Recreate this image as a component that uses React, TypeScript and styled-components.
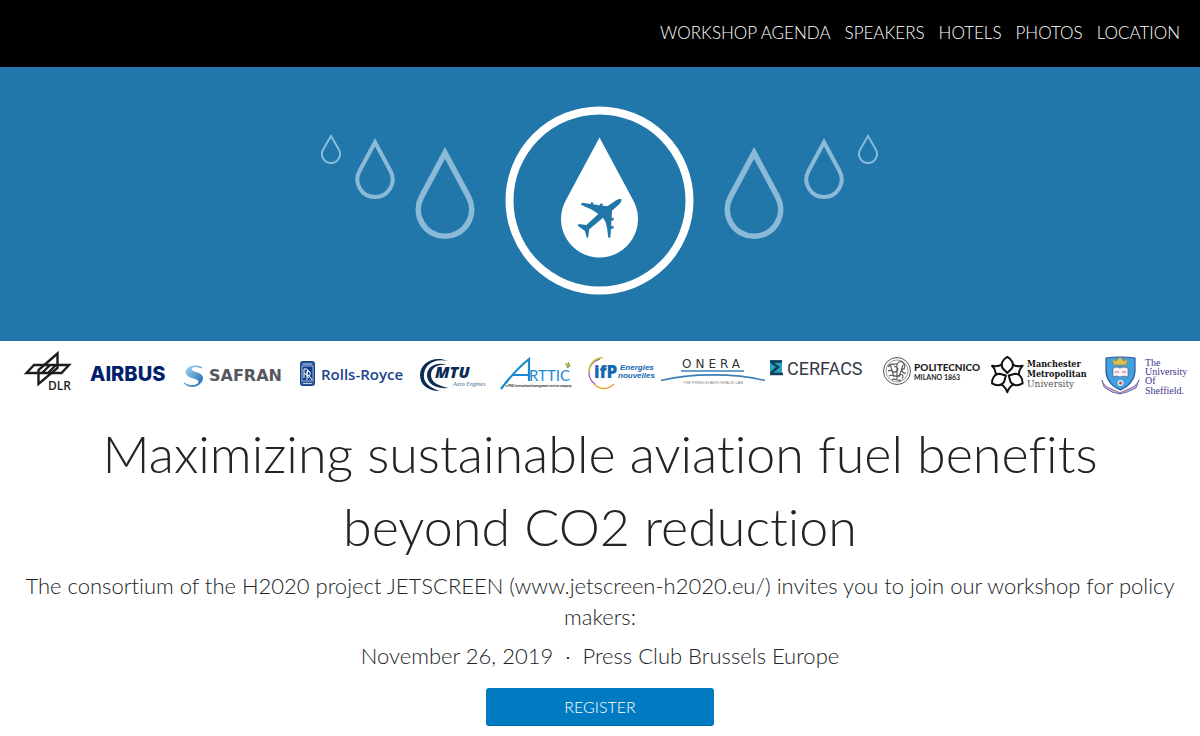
import React from "react";
import styled, { createGlobalStyle } from "styled-components";

const GlobalStyle = createGlobalStyle`
  * { box-sizing: border-box; }
  body {
    margin: 0;
    background: #fff;
    color: #212529;
    font-family: Lato, "Open Sans", sans-serif;
    font-weight: 300;
    font-variant-ligatures: none;
  }
`;

const NavBar = styled.nav`
  display: flex;
  justify-content: flex-end;
  align-items: center;
  flex-wrap: wrap;
  gap: 14px;
  min-height: 67px;
  padding: 0 20px 2px;
  background: #000;
`;

const NavLink = styled.a`
  color: #fff;
  font-size: 17px;
  line-height: 24px;
  text-decoration: none;
  text-transform: uppercase;
`;

const Hero = styled.header`
  display: flex;
  justify-content: center;
  padding: 39px 16px 45px;
  background: #2277aa;
`;

const HeroArt = styled.svg`
  display: block;
  width: 560px;
  max-width: 100%;
`;

const Partners = styled.section`
  display: flex;
  flex-wrap: wrap;
  justify-content: center;
  padding: 0 8px;
  font-weight: 400;
`;

const PartnerLogo = styled.svg`
  display: block;
  flex: none;
  height: 64px;
`;

const Intro = styled.main`
  display: flex;
  flex-direction: column;
  align-items: center;
  padding: 12px 20px;
  text-align: center;
`;

const Title = styled.h1`
  max-width: 1100px;
  margin: 0 0 7px;
  font-size: 52px;
  font-weight: 300;
  line-height: 73px;
`;

const Lead = styled.p`
  margin: 0 0 8px;
  font-size: 22px;
  line-height: 31px;
`;

const RegisterButton = styled.button`
  width: 228px;
  height: 38px;
  margin-top: 9px;
  border: 0;
  border-bottom: 1px solid #0068a6;
  border-radius: 3px;
  background: #007bc2;
  color: #fff;
  font: inherit;
  font-size: 16px;
  cursor: pointer;
`;

type DropProps = { cx: number; cy: number; r: number; top: number; stroke?: number };

/* A circle joined to its apex by two tangent lines; solid white without a stroke. */
function Drop({ cx, cy, r, top, stroke = 0 }: DropProps) {
  const sin = r / (cy - top);
  const cos = Math.sqrt(1 - sin * sin);
  const radius = r - stroke / 2;
  const apex = top + stroke / 2 / sin;
  const dx = radius * cos;
  const y = cy - radius * sin;
  return (
    <path
      d={`M${cx} ${apex} L${cx + dx} ${y} A${radius} ${radius} 0 1 1 ${cx - dx} ${y} Z`}
      fill={stroke ? "none" : "#fff"}
      stroke={stroke ? "#8abad8" : "none"}
      strokeWidth={stroke}
      strokeMiterlimit={10}
    />
  );
}

const sideDrops: DropProps[] = [
  { cx: 11, cy: 48, r: 10, top: 28, stroke: 2 },
  { cx: 55, cy: 73.4, r: 19.6, top: 32, stroke: 4 },
  { cx: 125, cy: 103.5, r: 29.5, top: 41, stroke: 5.6 },
];

const links = ["Workshop Agenda", "Speakers", "Hotels", "Photos", "Location"];

type LogoProps = { name: string; x: number; width: number; children: React.ReactNode };

function Logo({ name, x, width, children }: LogoProps) {
  return (
    <PartnerLogo role="img" aria-label={name} width={width} viewBox={`${x} 0 ${width} 64`}>
      {children}
    </PartnerLogo>
  );
}

const sans = '"Liberation Sans", Arial, sans-serif';

function PartnerLogos() {
  return (
    <Partners aria-label="Project partners">
      <Logo name="DLR" x={8} width={73}>
        <g fill="none" stroke="#1d1d1b" strokeWidth="2.4">
          <path d="M26.5 32 L34 24 H69 L61.500 32 Z" />
          <path d="M57.500 12.500 V27 L38.500 43 V29 Z" />
          <path d="M42 32 L50 24 M48 32 L56 24" />
        </g>
        <text x="48" y="49" fontFamily='"Open Sans", sans-serif' fontSize="12" fontWeight="600" fill="#1d1d1b">DLR</text>
      </Logo>
      <Logo name="Airbus" x={81} width={94}>
        <text x="90" y="40" fontFamily="Inter, sans-serif" fontSize="20" fontWeight="800" fill="#00206b">AIRBUS</text>
      </Logo>
      <Logo name="Safran" x={175} width={117}>
        <defs>
          <linearGradient id="safran" x1="0" y1="0" x2="1" y2="1">
            <stop offset="0" stopColor="#a9dcf5" />
            <stop offset="1" stopColor="#1765ad" />
          </linearGradient>
        </defs>
        <path d="M202 27 C197 23 186 25 186 31 C186 38 199 36 199 41 C198 45 190 46 184 42 C189 48 202 46 202.500 37 C203 31 191 32 191 28 C192 25 197 25 202 27 Z" fill="url(#safran)" stroke="url(#safran)" strokeWidth="1" />
        <text x="209" y="40" fontFamily='"DejaVu Sans", sans-serif' fontSize="16" fontWeight="700" fill="#56565f">SAFRAN</text>
      </Logo>
      <Logo name="Rolls-Royce" x={292} width={119}>
        <rect x="300.500" y="20.500" width="14" height="24" rx="2" fill="#2a5a9c" stroke="#123c80" />
        <rect x="302" y="25" width="11" height="15" fill="#12408a" stroke="#b9cce6" strokeWidth="0.800" />
        <path d="M303 23 H312 M303 42.500 H312" stroke="#b9cce6" strokeWidth="1" />
        <path d="M304 37 V28 H307 Q309 30.500 307 33 H304 M306 33 L309 37 M307 39 V30 H309 Q311.500 32 309.500 34.500 H307 M309 34.500 L312 39" fill="none" stroke="#fff" strokeWidth="1" />
        <text x="321" y="39" fontFamily='"Open Sans", sans-serif' fontSize="15" fontWeight="600" fill="#1b468e">Rolls-Royce</text>
      </Logo>
      <Logo name="MTU Aero Engines" x={411} width={82}>
        <path d="M448 20 C434 14 420 22 420 34 C420 44 428 50 440 50 C428 46 423 41 424 33 C425 23 435 17 448 20 Z" fill="#0b2c56" />
        <path d="M447 24 C436 20 427 26 427 34 C427 43 436 48 449 47 C438 45 431 41 431 34 C431 27 437 23 447 24 Z" fill="#0b2c56" />
        <text x="435" y="37" fontFamily='"Open Sans", sans-serif' fontSize="16" fontWeight="800" fontStyle="italic" fill="#0b2c56">MTU</text>
        <text x="453" y="45" fontFamily="Lato, sans-serif" fontSize="6" fontWeight="700" fontStyle="italic" fill="#7898b8">Aero Engines</text>
      </Logo>
      <Logo name="Arttic" x={493} width={86}>
        <path d="M501 48 C510 36 519 26 529 18 V40 M513 34 H529" fill="none" stroke="#1a8ad0" strokeWidth="2.200" />
        <text x="529" y="40" fontFamily="Lato, sans-serif" fontSize="15" fill="#1a8ad0">RTTIC</text>
        <path d="M565 22 l4 1 l-1 4 l-2 -2 Z" fill="#c9a437" />
        <path d="M568 21 l2 4 l-3 2" fill="none" stroke="#5b8740" />
        <text x="506" y="46" fontFamily="Lato, sans-serif" fontSize="3" fontStyle="italic" fontWeight="700" fill="#222">a PNO international management services company</text>
      </Logo>
      <Logo name="IFP Energies nouvelles" x={579} width={79}>
        <path d="M600 18 C587 21 586 37 595 43" fill="none" stroke="#a15bb0" strokeWidth="1.300" />
        <path d="M603 16.500 C594 17 589 23 589 31" fill="none" stroke="#c4cf3c" strokeWidth="1.500" />
        <path d="M594 43 C601 50 609 48 614 43" fill="none" stroke="#eda23b" strokeWidth="1.500" />
        <text x="594" y="37" fontFamily='"Open Sans", sans-serif' fontSize="17" fontWeight="800" fill="#1467b2">ifP</text>
        <text x="620" y="29" fontFamily={sans} fontSize="8" fontWeight="700" fontStyle="italic" fill="#1467b2">Energies</text>
        <text x="618" y="37" fontFamily={sans} fontSize="8" fontWeight="700" fontStyle="italic" fill="#1467b2">nouvelles</text>
      </Logo>
      <Logo name="Onera" x={658} width={109}>
        <text x="682" y="27" fontFamily='"DejaVu Sans", sans-serif' fontSize="12" letterSpacing="4" fill="#333">ONERA</text>
        <path d="M681 30 H744" stroke="#3d7fb8" strokeWidth="1.500" />
        <path d="M661 39.500 C690 32 735 32 765 39.500" fill="none" stroke="#3d7fb8" strokeWidth="1.600" />
        <text x="683" y="43" fontFamily={sans} fontSize="4" fill="#888">THE FRENCH AEROSPACE LAB</text>
      </Logo>
      <Logo name="Cerfacs" x={767} width={105}>
        <rect x="770" y="19" width="12" height="15" fill="#26a5bb" />
        <path d="M770 20.500 H782 M771 21 L778 26 L771 32 M770 33 H783" fill="none" stroke="#123f5c" strokeWidth="2.500" />
        <text x="787" y="34" fontFamily="Roboto, sans-serif" fontSize="18" fill="#343a46">CERFACS</text>
      </Logo>
      <Logo name="Politecnico Milano 1863" x={872} width={114}>
        <g fill="none" stroke="#555">
          <circle cx="897" cy="30" r="13.500" />
          <circle cx="897" cy="30" r="11" strokeWidth="0.600" />
          <path d="M888 26 C891 20 896 26 899 21 C903 19 906 25 904 28 C900 27 902 33 906 32 M888 30 C893 27 893 34 897 30 C900 27 896 26 894 25 M889 35 C893 32 896 38 900 34 C903 32 904 36 902 38 M892 39 C895 36 898 41 901 39 M897 22 V38 M890 23 L894 36 M903 24 L899 36" strokeWidth="1.100" />
        </g>
        <text x="914" y="30" fontFamily="Lato, sans-serif" fontSize="10" fontWeight="900" fill="#1e1e1e">POLITECNICO</text>
        <text x="914" y="39" fontFamily="Lato, sans-serif" fontSize="7" fontWeight="700" fill="#1e1e1e">MILANO 1863</text>
      </Logo>
      <Logo name="Manchester Metropolitan University" x={986} width={109}>
        <g transform="translate(985 9) scale(0.333)" fill="none" stroke="#111" strokeWidth="6" strokeLinejoin="round">
          {[0, 120, 240].map((angle) => (
            <g key={angle} transform={`rotate(${angle} 67 74)`}>
              <path d="M67 69 L53 55 C45 42 54 28 67 21 C80 28 89 42 81 55 Z" />
              <path d="M48 103 Q62 110 67 127 Q72 110 86 103" />
            </g>
          ))}
        </g>
        <text x="1027" y="26" fontFamily='"DejaVu Serif Condensed", "DejaVu Serif", serif' fontSize="9" fontWeight="700" fill="#111">Manchester</text>
        <text x="1027" y="36" fontFamily='"DejaVu Serif Condensed", "DejaVu Serif", serif' fontSize="9" fontWeight="700" fill="#111">Metropolitan</text>
        <text x="1027" y="46" fontFamily='"DejaVu Serif", serif' fontSize="9" fill="#555">University</text>
      </Logo>
      <Logo name="The University of Sheffield" x={1095} width={97}>
        <path d="M1102 39 C1104 47 1111 47 1120 52 C1129 47 1136 47 1139 39 L1136 47 L1127 51 L1120 53 L1112 51 L1104 46 Z" fill="#c9b5d8" stroke="#7b679d" strokeWidth="1" />
        <path d="M1106 17 Q1120 15 1135 17 V31 C1134 41 1127 46 1120.500 49 C1113 46 1107 40 1106 31 Z" fill="#3ea2dc" stroke="#31529c" strokeWidth="1.200" />
        <path d="M1114 24 L1112 18 L1116 20 L1120 16 L1124 20 L1128 18 L1126 24 Z" fill="#dcc04f" stroke="#927d32" strokeWidth="0.500" />
        <path d="M1113 27 Q1117 25 1120 27 Q1124 25 1128 27 V36 Q1124 34 1120 36 Q1117 34 1113 36 Z" fill="#f6f3f4" stroke="#6b5b82" strokeWidth="0.700" />
        <path d="M1115 31 H1119 M1122 31 H1126" stroke="#cc6475" />
        <circle cx="1120.500" cy="42" r="3" fill="#e4e6f2" />
        <circle cx="1120.500" cy="42" r="1.500" fill="#c43c58" />
        <g fontFamily='"Liberation Serif", serif' fontSize="10" fill="#3f358e">
          <text x="1145" y="25">The</text>
          <text x="1145" y="34">University</text>
          <text x="1145" y="43">Of</text>
          <text x="1145" y="53">Sheffield.</text>
        </g>
      </Logo>
    </Partners>
  );
}

export default function App() {
  return (
    <>
      <GlobalStyle />
      <NavBar>
        {links.map((label) => (
          <NavLink key={label} href={`#${label.toLowerCase().replace(" ", "-")}`}>{label}</NavLink>
        ))}
      </NavBar>
      <Hero>
        <HeroArt viewBox="0 0 560 190" role="img" aria-label="Aircraft inside a fuel drop">
          {sideDrops.map((d) => <Drop key={d.cx} {...d} />)}
          {sideDrops.map((d) => <Drop key={d.cx} {...d} cx={559 - d.cx} />)}
          <circle cx="279.500" cy="94.500" r="90" fill="none" stroke="#fff" strokeWidth="8" />
          <Drop cx={279.5} cy={113} r={38.5} top={31.500} />
          <path
            transform="translate(250 84) scale(0.3333)"
            fill="#2277aa"
            d="M154 27 C156 33 151 40 146 44 L126 62 L125 84 L131 83 V90 L124 93 V109 L131 108 V115 L123 118 L121 143 H115 L111 113 L107 97 L99 83 L58 118 L54 143 H50 L45 123 L23 107 L26 102 L49 105 L85 72 L66 59 L33 44 L36 38 L62 42 L64 36 L70 38 L69 43 L89 46 L92 40 L99 42 L97 47 L113 48 L136 32 C142 28 149 26 154 27 Z"
          />
        </HeroArt>
      </Hero>
      <PartnerLogos />
      <Intro>
        <Title>Maximizing sustainable aviation fuel benefits beyond CO2 reduction</Title>
        <Lead>
          The consortium of the H2020 project JETSCREEN (www.jetscreen-h2020.eu/) invites you to join our workshop for policy makers:
        </Lead>
        <Lead>November 26, 2019 &nbsp;·&nbsp; Press Club Brussels Europe</Lead>
        <RegisterButton type="button">REGISTER</RegisterButton>
      </Intro>
    </>
  );
}
